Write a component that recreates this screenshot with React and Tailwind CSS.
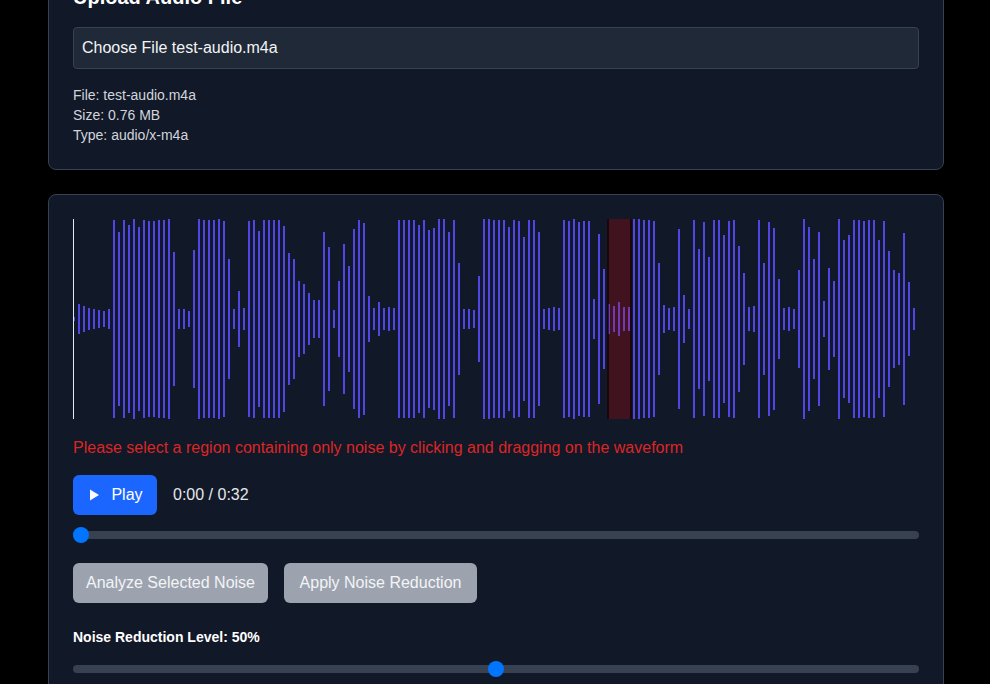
import React from 'react';

const peaks = [
  0.02, 0.15, 0.13, 0.11, 0.1, 0.09, 0.08, 0.1,
  0.99, 0.87, 0.99, 0.94, 1, 0.92, 0.99, 0.98, 0.98, 0.99, 0.99, 1,
  0.67, 0.1, 0.1, 0.08, 0.69,
  1, 0.99, 0.99, 0.99, 1, 0.98, 0.6,
  0.1, 0.28, 0.11,
  0.98, 0.99, 0.88, 0.99, 0.99, 0.99, 0.99, 0.93, 0.66, 0.6, 0.38, 0.35, 0.26, 0.19, 0.19,
  0.87, 0.72, 0.09, 0.38, 0.75, 0.53, 0.9, 0.99,
  0.96, 0.23, 0.11, 0.17, 0.11, 0.12, 0.11,
  0.99, 0.99, 0.99, 0.99, 0.94, 0.99, 0.89, 0.91, 1, 1, 0.87, 0.99, 0.56,
  0.1, 0.1, 0.09, 0.43,
  1, 1, 0.99, 0.99, 0.99, 0.92, 0.99, 0.98, 0.82, 0.99, 0.99, 0.87,
  0.1, 0.11, 0.12, 0.11,
  0.99, 0.98, 1, 0.97, 0.98, 0.98, 0.2, 0.85, 0.5,
  0.15, 0.13, 0.17, 0.12, 0.12,
  1, 1, 0.99, 0.99, 0.98, 0.56, 0.14, 0.11, 0.12, 0.9, 0.24, 0.1,
  0.99, 0.7, 0.97, 0.62, 0.99, 0.99, 0.84, 0.98, 0.99, 0.73,
  0.46, 0.12, 0.13, 0.99, 0.56, 0.97, 0.91, 0.4, 0.11, 0.12, 0.1, 0.49, 1, 0.92, 0.6, 0.87,
  0.18, 0.51, 0.38, 1, 0.79, 0.84, 0.99, 0.99, 0.98, 0.99, 0.99, 0.79, 0.98, 0.68, 0.49, 0.46,
  0.86, 0.37, 0.11,
];

const Waveform = () => (
  <div className="relative h-[200px] flex items-center gap-[3px]">
    {peaks.map((p, i) => (
      <div
        key={i}
        className="w-[2px] shrink-0 bg-[#4f46e5]"
        style={{ height: `${Math.max(2, Math.round(p * 100) * 2)}px` }}
      />
    ))}
    {/* selected noise region */}
    <div className="absolute top-0 left-[534px] h-full w-[25px] bg-[rgba(255,0,0,0.2)] border-x-2 border-[rgba(0,0,0,0.6)]" />
    {/* playhead */}
    <div className="absolute top-0 left-0 h-full w-px bg-[#e0e7ff]" />
  </div>
);

const Slider = ({ value }) => (
  <div className="relative h-4 flex items-center">
    <div className="h-2 w-full rounded-full bg-[#374151]" />
    <div
      className="absolute top-0 h-4 w-4 rounded-full bg-[#0075ff]"
      style={{ left: `calc(${value / 100} * (100% - 16px))` }}
    />
  </div>
);

const App = () => {
  return (
    <div className="min-h-screen bg-black text-white font-['Liberation_Sans',Arial,sans-serif] overflow-hidden">
      <div className="w-[896px] ml-12 mt-[-42px] space-y-6 pb-10">
        <div className="rounded-lg border border-[#374151] bg-[#111827] p-6">
          <h2 className="text-xl font-semibold mb-4">Upload Audio File</h2>
          <div className="rounded border border-[#374151] bg-[#1f2937] px-2 py-2 text-base text-[#f3f4f6]">
            Choose File test-audio.m4a
          </div>
          <div className="mt-4 text-sm text-[#d1d5db]">
            <p>File: test-audio.m4a</p>
            <p>Size: 0.76 MB</p>
            <p>Type: audio/x-m4a</p>
          </div>
        </div>

        <div className="rounded-lg border border-[#374151] bg-[#111827] p-6">
          <Waveform />
          <p className="mt-4 pt-px text-base text-[#dc2626]">
            Please select a region containing only noise by clicking and dragging on the waveform
          </p>
          <div className="mt-[15px] flex items-center gap-4">
            <button className="flex h-10 w-[84px] items-center justify-center gap-2 rounded-md bg-[#1a66ff] text-base text-white">
              <svg width="16" height="16" viewBox="0 0 16 16" fill="currentColor">
                <path d="M3 2.5v11L12 8z" />
              </svg>
              Play
            </button>
            <span className="text-base text-[#e5e7eb]">0:00 / 0:32</span>
          </div>
          <div className="mt-3">
            <Slider value={0} />
          </div>
          <div className="mt-5 flex gap-4">
            <button className="h-10 w-[195px] rounded-md bg-[#9ca3af] text-base text-[#f3f4f6]">
              Analyze Selected Noise
            </button>
            <button className="h-10 w-[193px] rounded-md bg-[#9ca3af] text-base text-[#f3f4f6]">
              Apply Noise Reduction
            </button>
          </div>
          <div className="mt-6">
            <label className="block text-sm font-bold text-white">Noise Reduction Level: 50%</label>
            <div className="mt-[14px]">
              <Slider value={50} />
            </div>
          </div>
        </div>
      </div>
    </div>
  );
};

export default App;
